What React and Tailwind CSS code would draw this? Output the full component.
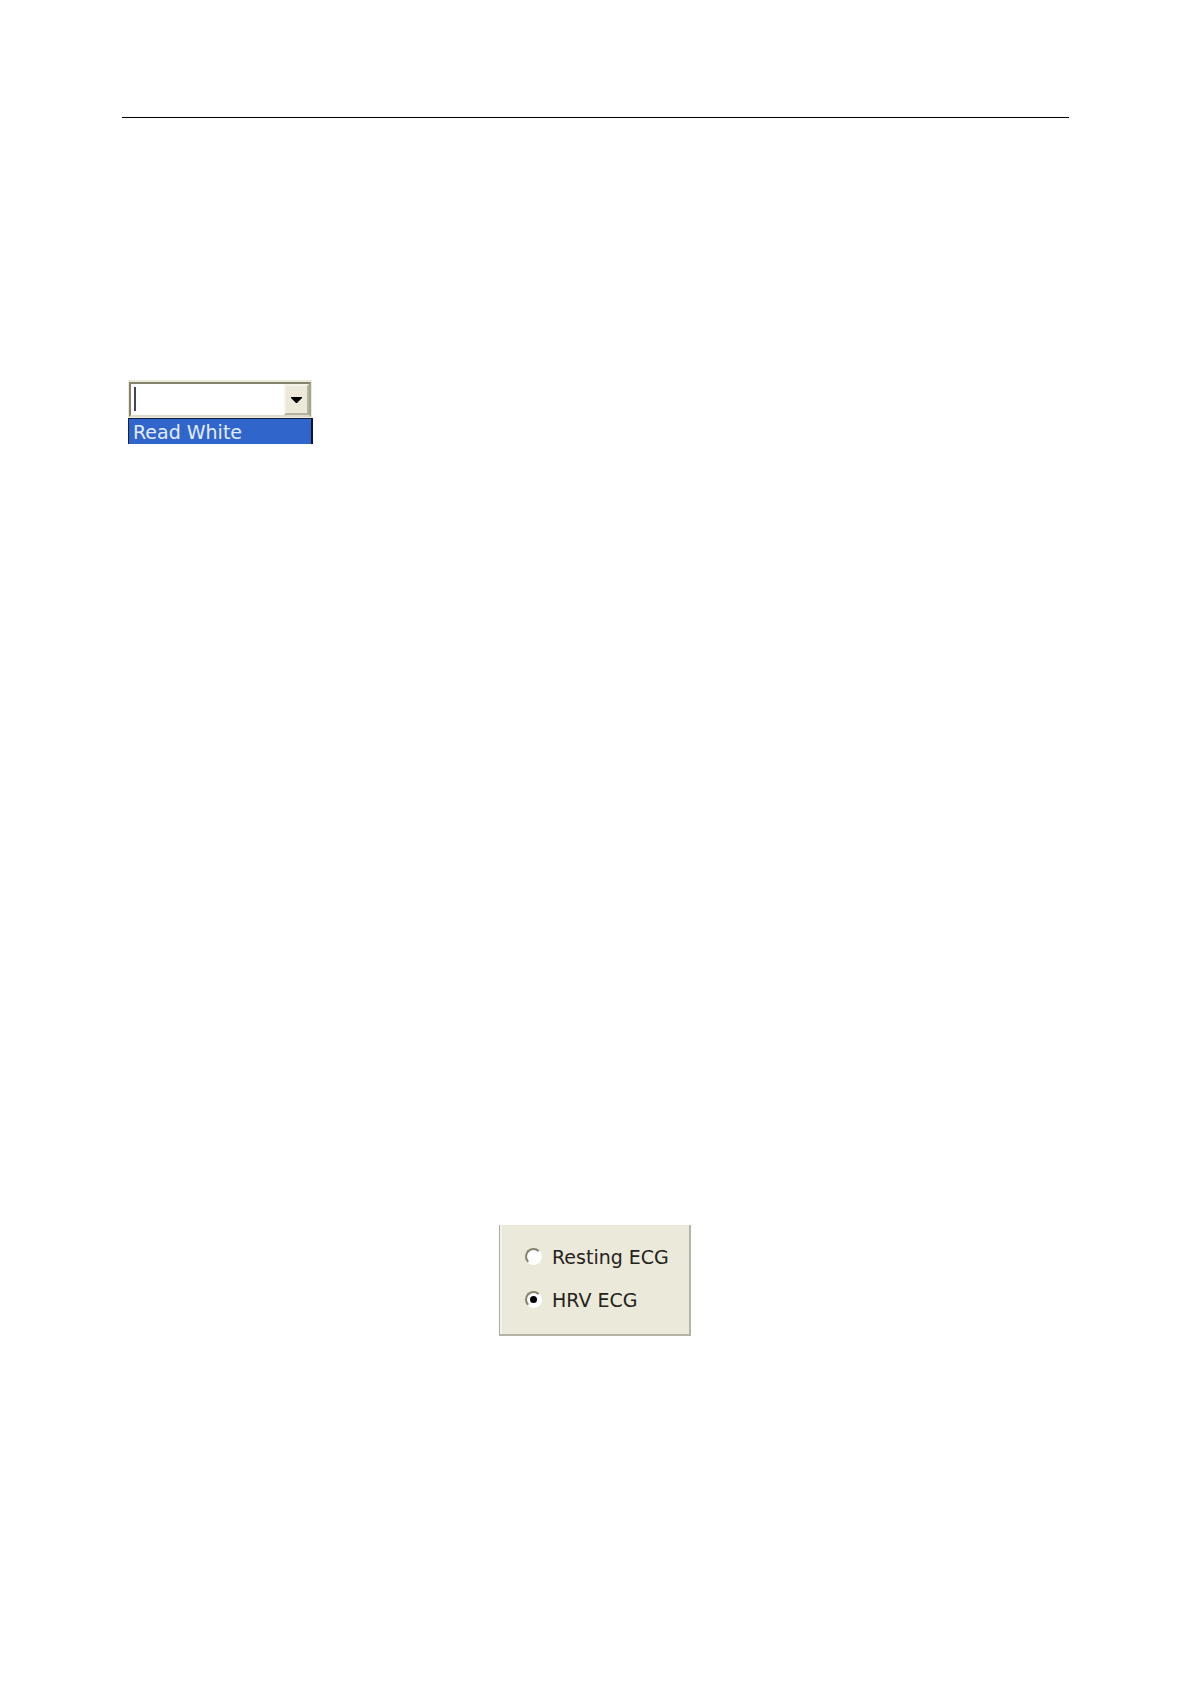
import { useState } from 'react'

const READ_OPTIONS = ['Read White']

const ECG_MODES = [
  { id: 'resting', label: 'Resting ECG' },
  { id: 'hrv', label: 'HRV ECG' },
]

function ReadCombo() {
  const [value, setValue] = useState('')

  return (
    <div className="ml-[6px] w-[185px]">
      <div className="w-[184px] border border-t-2 border-[#ece9d8] bg-white">
        <div className="flex h-[35px] border-2 border-t-[#85836f] border-r-[#a5a392] border-b-[#dedbca] border-l-[#85836f]">
          <div className="relative min-w-0 flex-1">
            <input
              type="text"
              aria-label="Read type"
              value={value}
              onChange={(event) => setValue(event.target.value)}
              className="h-full w-full bg-white px-1 text-[19px] outline-none"
            />
            <span className="absolute top-[3px] left-[3px] h-6 w-[2px] bg-[#45455a]" />
          </div>
          <button
            type="button"
            aria-label="Show options"
            className="flex w-[25px] items-center justify-center border-2 border-t-[#f5f3e8] border-r-[#b5b2a0] border-b-[#b5b2a0] border-l-[#f5f3e8] bg-[#ece9d8]"
          >
            <svg width="11" height="6" viewBox="0 0 11 6" aria-hidden="true">
              <path d="M0 0H11V1L6 6H5L0 1Z" fill="#000" />
            </svg>
          </button>
        </div>
      </div>

      <select
        size={2}
        aria-label="Read options"
        onChange={(event) => setValue(event.target.value)}
        className="block h-[26px] w-full appearance-none overflow-hidden border-t border-r-2 border-l border-t-[#14204a] border-r-[#0c1430] border-l-[#14204a] bg-[#3066cc] outline-none"
      >
        {READ_OPTIONS.map((option) => (
          <option
            key={option}
            value={option}
            className="bg-[#3066cc] px-1 pt-[2px] pb-0 text-[19px] text-[#e4ecfb]"
          >
            {option}
          </option>
        ))}
      </select>
    </div>
  )
}

function EcgModePanel() {
  const [mode, setMode] = useState('hrv')

  return (
    <fieldset className="flex h-[111px] w-[192px] flex-col gap-[17px] border-r-2 border-b-2 border-l border-r-[#b5b4a6] border-b-[#b5b4a6] border-l-[#aaa99b] bg-[#ebe9d9] pt-[19px] pl-[25px] shadow-[inset_2px_0_0_#f5f4ea]">
      {ECG_MODES.map(({ id, label }) => (
        <label
          key={id}
          className="flex h-[26px] items-center gap-[10px] text-[19px] leading-[26px] whitespace-nowrap text-[#24231c]"
        >
          <input
            type="radio"
            name="ecg-mode"
            value={id}
            checked={mode === id}
            onChange={() => setMode(id)}
            className="mb-[2px] flex h-[17px] w-[17px] shrink-0 appearance-none items-center justify-center rounded-full border-2 border-t-[#85836f] border-r-white border-b-white border-l-[#85836f] bg-white checked:before:h-[7px] checked:before:w-[7px] checked:before:rounded-full checked:before:bg-black checked:before:content-['']"
          />
          {label}
        </label>
      ))}
    </fieldset>
  )
}

function App() {
  return (
    <main className="min-h-screen bg-white pt-[117px] pr-[121px] pb-20 pl-[122px] font-['DejaVu_Sans',sans-serif]">
      <hr className="border-t border-black" />

      <section className="pt-[262px]">
        <ReadCombo />
      </section>

      <section className="flex justify-center pt-[781px] pr-px">
        <EcgModePanel />
      </section>
    </main>
  )
}

export default App
